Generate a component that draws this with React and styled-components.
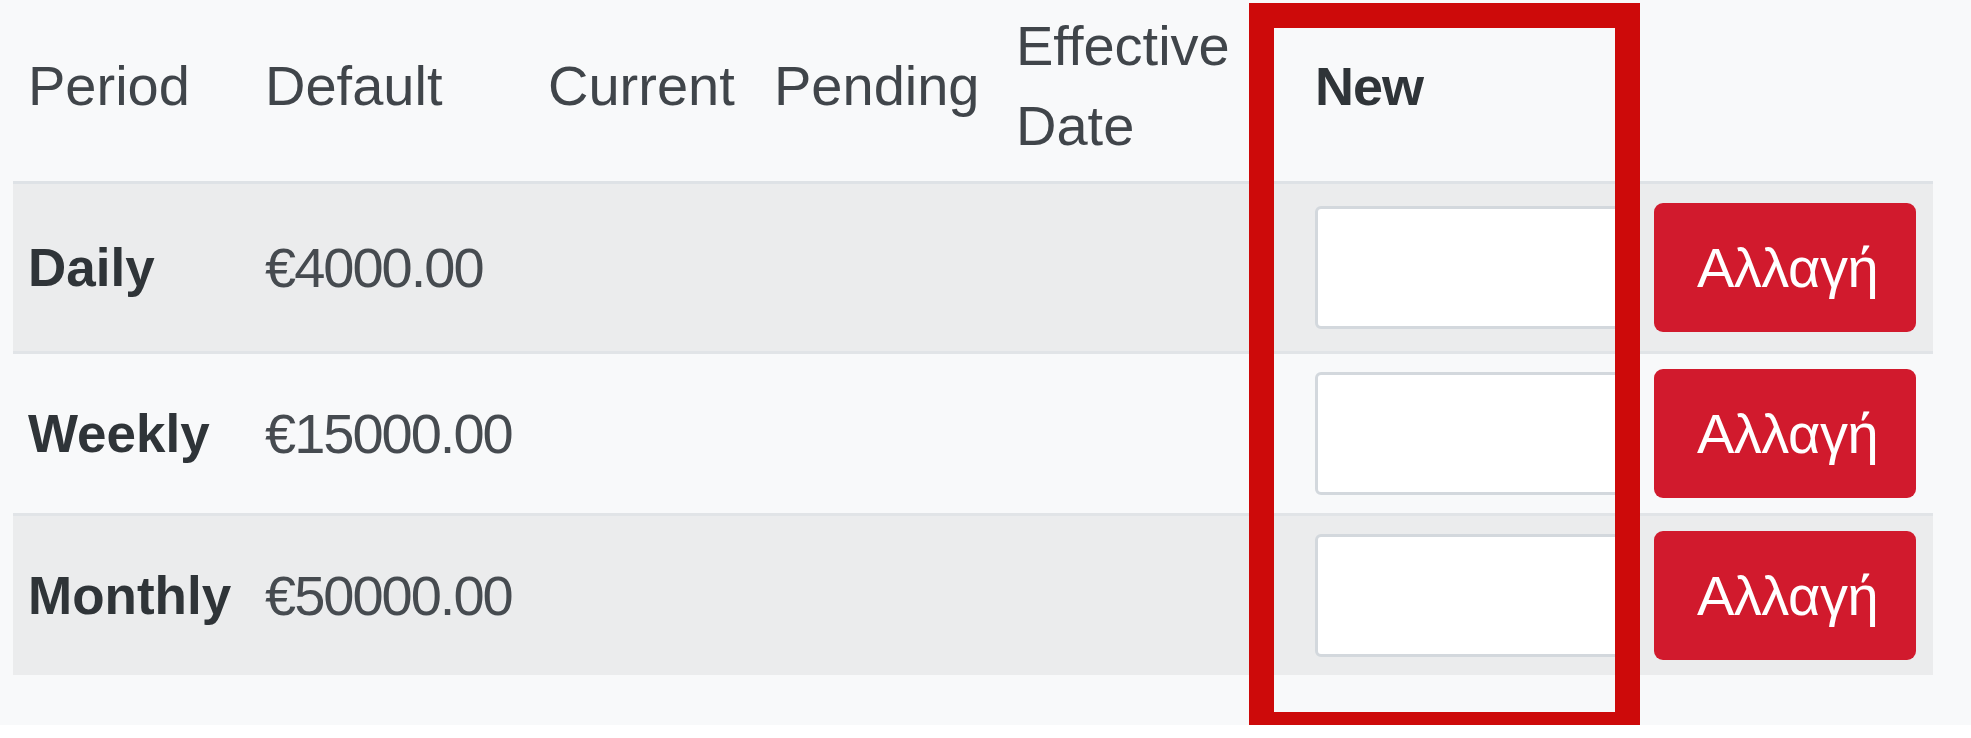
import React from "react";
import styled, { createGlobalStyle } from "styled-components";

const GlobalStyle = createGlobalStyle`
  html, body {
    margin: 0;
    padding: 0;
    background: #ffffff;
    font-family: "Liberation Sans", Arial, Helvetica, sans-serif;
  }
  * { box-sizing: border-box; }
`;

const COLS = "237px 283px 226px 242px 299px 339px 1fr";

const Page = styled.div`
  position: relative;
  background: #f8f9fa;
  padding: 0 38px 50px 13px;
  font-size: 56px;
  line-height: 80px;
`;

const Table = styled.div`
  display: flex;
  flex-direction: column;
`;

const HeadRow = styled.div`
  display: grid;
  grid-template-columns: ${COLS};
  align-items: center;
  padding: 6px 0 15px;
  border-bottom: 3px solid #dee2e6;
`;

const HeadCell = styled.div`
  padding: 0 15px;
  color: ${(p) => (p.$strong ? "#2f3438" : "#40454a")};
  font-weight: ${(p) => (p.$strong ? 700 : 400)};
  font-size: ${(p) => (p.$strong ? "54px" : "56px")};
  letter-spacing: ${(p) => (p.$strong ? "-1px" : "0")};
`;

const Body = styled.div`
  display: flex;
  flex-direction: column;
  & > :first-child {
    padding: 19px 0;
    border-top: none;
  }
`;

const BodyRow = styled.div`
  display: grid;
  grid-template-columns: ${COLS};
  align-items: center;
  padding: 15px 0;
  border-top: 3px solid #e1e4e7;
  background: ${(p) => (p.$striped ? "#ebeced" : "transparent")};
`;

const Cell = styled.div`
  padding: 0 15px;
  white-space: nowrap;
`;

const PeriodCell = styled(Cell)`
  color: #2f3438;
  font-weight: 700;
  font-size: 53px;
`;

const AmountCell = styled(Cell)`
  color: #464b50;
  letter-spacing: -2px;
`;

const InputCell = styled(Cell)`
  display: flex;
`;

const NewInput = styled.input`
  width: 313px;
  height: 123px;
  border: 3px solid #d3d8dd;
  border-radius: 6px;
  background: #ffffff;
  font: inherit;
  outline: none;
`;

const ChangeButton = styled.button`
  height: 129px;
  padding: 0 38px 0 43px;
  border: none;
  border-radius: 9px;
  background: #d11a2d;
  color: #ffffff;
  font-family: inherit;
  font-size: 56px;
  line-height: 80px;
  letter-spacing: -0.5px;
  cursor: pointer;
`;

const Highlight = styled.div`
  position: absolute;
  left: 1249px;
  top: 3px;
  width: 391px;
  height: 734px;
  border: 25px solid #cd0a0a;
  pointer-events: none;
`;

const rows = [
  { period: "Daily", amount: "€4000.00" },
  { period: "Weekly", amount: "€15000.00" },
  { period: "Monthly", amount: "€50000.00" },
];

export default function App() {
  return (
    <>
      <GlobalStyle />
      <Page>
        <Table>
          <HeadRow>
            <HeadCell>Period</HeadCell>
            <HeadCell>Default</HeadCell>
            <HeadCell>Current</HeadCell>
            <HeadCell>Pending</HeadCell>
            <HeadCell>Effective Date</HeadCell>
            <HeadCell $strong>New</HeadCell>
            <HeadCell />
          </HeadRow>
          <Body>
            {rows.map((r, i) => (
              <BodyRow key={r.period} $striped={i % 2 === 0}>
                <PeriodCell>{r.period}</PeriodCell>
                <AmountCell>{r.amount}</AmountCell>
                <Cell />
                <Cell />
                <Cell />
                <InputCell>
                  <NewInput type="text" />
                </InputCell>
                <Cell>
                  <ChangeButton type="button">Αλλαγή</ChangeButton>
                </Cell>
              </BodyRow>
            ))}
          </Body>
        </Table>
        <Highlight />
      </Page>
    </>
  );
}
